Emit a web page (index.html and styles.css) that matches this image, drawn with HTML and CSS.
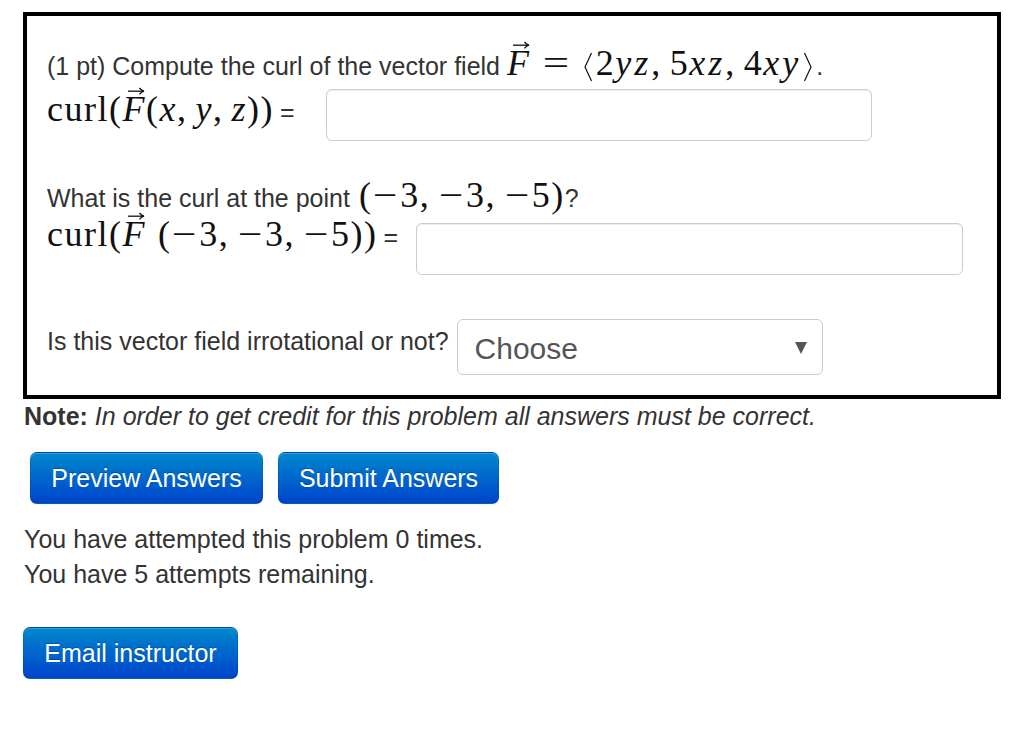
FILE: index.html
```html
<!DOCTYPE html>
<html>
<head>
<meta charset="utf-8">
<link rel="stylesheet" href="styles.css">
</head>
<body>
<div class="page">
  <div class="problem">
    <div class="line l1"><span class="txt">(1 pt) Compute the curl of the vector field</span> <span class="m"><span class="vec"><i>F</i><svg class="arrow" viewBox="0 0 18 8" width="18" height="8"><path d="M1 4.2 H16.2" /><path d="M12.5 1 Q14.5 3.6 17 4.2 Q14.5 4.8 12.5 7.4" /></svg></span><span class="rel">=</span><svg class="ang" viewBox="0 0 10 30" width="10" height="30"><path d="M8.5 1 L2 15 L8.5 29" /></svg>2<i>yz</i><span class="cm">,</span>5<i>xz</i><span class="cm">,</span>4<i>xy</i><svg class="ang" viewBox="0 0 10 30" width="10" height="30"><path d="M1.5 1 L8 15 L1.5 29" /></svg></span>.</div>
    <div class="row l2">
      <span class="label"><span class="m">curl(<span class="vec"><i>F</i><svg class="arrow" viewBox="0 0 18 8" width="18" height="8"><path d="M1 4.2 H16.2" /><path d="M12.5 1 Q14.5 3.6 17 4.2 Q14.5 4.8 12.5 7.4" /></svg></span>(<i>x</i><span class="cm">,</span><i>y</i><span class="cm">,</span><i>z</i>))</span><span class="eq">=</span></span>
      <input class="answer a1" type="text">
    </div>
    <div class="line l3"><span class="txt">What is the curl at the point</span> <span class="m pt">(<span class="mi">−</span>3<span class="cm">,</span><span class="mi">−</span>3<span class="cm">,</span><span class="mi">−</span>5)</span>?</div>
    <div class="row l4">
      <span class="label"><span class="m">curl(<span class="vec"><i>F</i><svg class="arrow" viewBox="0 0 18 8" width="18" height="8"><path d="M1 4.2 H16.2" /><path d="M12.5 1 Q14.5 3.6 17 4.2 Q14.5 4.8 12.5 7.4" /></svg></span><span class="sp"></span>(<span class="mi">−</span>3<span class="cm">,</span><span class="mi">−</span>3<span class="cm">,</span><span class="mi">−</span>5))</span><span class="eq">=</span></span>
      <input class="answer a2" type="text">
    </div>
    <div class="row l5">
      <span class="label txt">Is this vector field irrotational or not?</span>
      <div class="select"><span class="choose">Choose</span><svg class="caret" viewBox="0 0 12 12" width="12" height="12"><polygon points="0,0 12,0 6,12" /></svg></div>
    </div>
  </div>
  <p class="note"><b>Note:</b> <i>In order to get credit for this problem all answers must be correct.</i></p>
  <div class="buttons">
    <button class="btn preview">Preview Answers</button>
    <button class="btn submit">Submit Answers</button>
  </div>
  <p class="attempts">You have attempted this problem 0 times.<br>You have 5 attempts remaining.</p>
  <button class="btn email">Email instructor</button>
</div>
</body>
</html>
```
FILE: styles.css
```css
body {
  margin: 0;
  font-family: "Liberation Sans", Arial, sans-serif;
  color: #333;
  background: #fff;
}
.page {
  padding: 12px 0 0 23px;
}
.problem {
  box-sizing: border-box;
  width: 978px;
  border: 4px solid #000;
  padding: 0 20px 20px 20px;
}
.line, .row {
  font-size: 25px;
  line-height: 36px;
  white-space: nowrap;
}
.line {
  height: 36px;
}
.row {
  display: flex;
  align-items: flex-start;
}
.m {
  font-family: "Liberation Serif", "Times New Roman", serif;
  font-size: 36px;
  line-height: 30px;
  color: #111;
  letter-spacing: 1.5px;
}
.m i {
  font-style: italic;
}
.l1 .m i {
  letter-spacing: 3px;
}
.mi {
  display: inline-block;
  transform: scaleX(1.2);
  margin: 0 3px 0 3px;
}
.vec {
  position: relative;
  display: inline-block;
}
.arrow {
  position: absolute;
  left: 5px;
  top: -7px;
  fill: none;
  stroke: #111;
  stroke-width: 1.3;
}
.rel {
  display: inline-block;
  transform: scaleX(1.3);
  margin: 0 13px 0 14px;
}
.ang {
  fill: none;
  stroke: #111;
  stroke-width: 1.2;
  vertical-align: -7px;
  margin: 0 3px 0 2px;
}
.cm {
  margin-right: 8px;
}
.eq {
  font-family: "Liberation Sans", Arial, sans-serif;
  font-size: 25px;
  color: #333;
  margin-left: 6px;
  letter-spacing: 0;
}
.sp {
  display: inline-block;
  width: 12px;
}
.l1 {
  margin-top: 32px;
}
.l2 {
  margin-top: 5px;
  height: 52px;
}
.l2 .label {
  width: 279px;
  padding-top: 5px;
}
.l3 {
  margin-top: 39px;
}
.pt {
  margin-left: 2px;
}
.l4 {
  margin-top: 3px;
  height: 56px;
}
.l4 .label {
  width: 369px;
}
.l4 .answer {
  margin-top: 4px;
}
.answer {
  box-sizing: border-box;
  height: 52px;
  width: 547px;
  border: 1px solid #ccc;
  border-radius: 6px;
  box-shadow: inset 0 1px 1px rgba(0, 0, 0, 0.075);
  background: #fff;
  font-size: 21px;
  padding: 0 10px;
}
.a1 {
  width: 546px;
}
.l5 {
  margin-top: 44px;
  height: 56px;
}
.l5 .label {
  padding-top: 4px;
  margin-right: 8px;
}
.select {
  box-sizing: border-box;
  width: 366px;
  height: 56px;
  border: 1px solid #ccc;
  border-radius: 6px;
  background: #fff;
  display: flex;
  align-items: center;
  justify-content: space-between;
  padding: 0 15px 0 17px;
}
.choose {
  font-size: 30px;
  color: #555;
  line-height: 1;
  padding-top: 4px;
}
.caret {
  fill: #555;
  margin-top: 2px;
}
.note {
  margin: 0;
  padding-left: 1px;
  font-size: 25px;
  line-height: 35px;
}
.note b {
  color: #333;
}
.buttons {
  display: flex;
  gap: 15px;
  margin-top: 18px;
  padding-left: 7px;
}
.btn {
  box-sizing: border-box;
  height: 52px;
  font-family: "Liberation Sans", Arial, sans-serif;
  font-size: 25px;
  color: #fff;
  text-shadow: 0 -1px 0 rgba(0, 0, 0, 0.25);
  background: linear-gradient(to bottom, #0088cc, #0044cc);
  border: 1px solid;
  border-color: rgba(0, 0, 0, 0.1) rgba(0, 0, 0, 0.1) rgba(0, 0, 0, 0.25);
  border-radius: 7px;
  box-shadow: inset 0 1px 0 rgba(255, 255, 255, 0.2), 0 1px 2px rgba(0, 0, 0, 0.05);
  padding: 0;
  text-align: center;
}
.preview {
  width: 233px;
}
.submit {
  width: 221px;
}
.attempts {
  margin: 18px 0 0 0;
  padding-left: 1px;
  font-size: 25px;
  line-height: 35px;
}
.email {
  display: block;
  margin-top: 35px;
  width: 215px;
}
```
